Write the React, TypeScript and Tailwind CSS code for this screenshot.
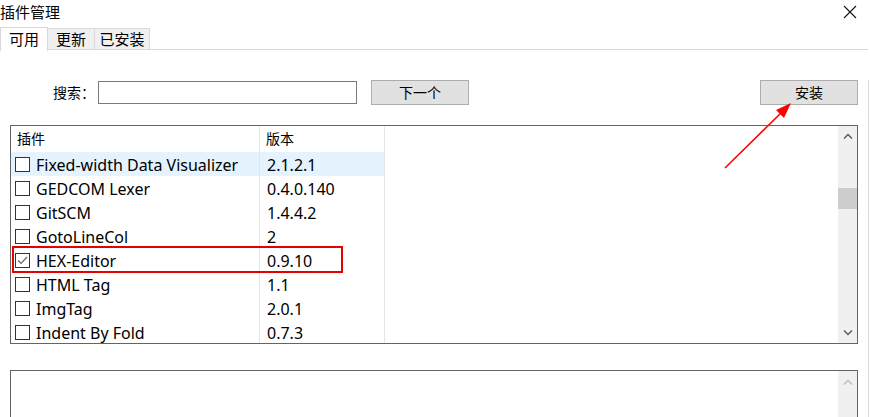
import React from "react";

const plugins = [
  { name: "Fixed-width Data Visualizer", version: "2.1.2.1", checked: false, hover: true },
  { name: "GEDCOM Lexer", version: "0.4.0.140", checked: false },
  { name: "GitSCM", version: "1.4.4.2", checked: false },
  { name: "GotoLineCol", version: "2", checked: false },
  { name: "HEX-Editor", version: "0.9.10", checked: true },
  { name: "HTML Tag", version: "1.1", checked: false },
  { name: "ImgTag", version: "2.0.1", checked: false },
  { name: "Indent By Fold", version: "0.7.3", checked: false },
];

const font = { fontFamily: '"Noto Sans", "Noto Sans CJK SC", sans-serif' };

function Checkbox({ checked }: { checked: boolean }) {
  return (
    <span className="w-[15px] h-[15px] border border-[#333] bg-white flex items-center justify-center shrink-0">
      {checked && (
        <svg width="13" height="13" viewBox="0 0 13 13">
          <path d="M2 6.5 L5 9.5 L11 3" stroke="#666" strokeWidth="1.2" fill="none" />
        </svg>
      )}
    </span>
  );
}

function Chevron({ up, color = "#606060" }: { up: boolean; color?: string }) {
  return (
    <svg width="10" height="6" viewBox="0 0 10 6">
      <path
        d={up ? "M1 5.5 L5 1.5 L9 5.5" : "M1 0.5 L5 4.5 L9 0.5"}
        stroke={color}
        strokeWidth="1.5"
        fill="none"
      />
    </svg>
  );
}

export default function App() {
  return (
    <div
      className="relative w-[870px] h-[417px] bg-white overflow-hidden text-[#000]"
      style={font}
    >
      <div className="flex items-center justify-between h-[24px]">
        <span className="text-[15px] leading-none pt-[1px]">插件管理</span>
        <svg width="14" height="14" viewBox="0 0 14 14" className="mr-[13px] mt-[-1px]">
          <path d="M1 1 L13 13 M13 1 L1 13" stroke="#111" strokeWidth="1.1" />
        </svg>
      </div>

      <div className="flex items-end h-[26px] pr-[2px]">
        <div className="h-[24px] w-[48px] border border-b-0 border-[#d9d9d9] bg-white flex items-center justify-center text-[15px] leading-none relative z-10 -mb-px">
          可用
        </div>
        <div className="h-[22px] w-[47px] border border-l-0 border-[#d9d9d9] bg-[#f0f0f0] flex items-center justify-center text-[15px] leading-none">
          更新
        </div>
        <div className="h-[22px] w-[55px] border border-l-0 border-[#d9d9d9] bg-[#f0f0f0] flex items-center justify-center text-[15px] leading-none">
          已安装
        </div>
        <div className="flex-1 h-[22px] border-b border-[#d9d9d9]" />
      </div>

      <div className="border-r border-[#d9d9d9] mr-[1px] h-[380px]">
        <div className="flex items-center h-[25px] mt-[30px]">
          <span className="ml-[53px] w-[45px] text-[14px] leading-none">搜索：</span>
          <div className="w-[259px] h-[23px] border border-[#7a7a7a] bg-white" />
          <button className="ml-[14px] w-[98px] h-[25px] border border-[#adadad] bg-[#e1e1e1] text-[14px] leading-none">
            下一个
          </button>
          <div className="flex-1" />
          <button className="mr-[10px] w-[98px] h-[25px] border border-[#adadad] bg-[#e1e1e1] text-[14px] leading-none">
            安装
          </button>
        </div>

        <div className="ml-[10px] mr-[10px] mt-[20px] h-[219px] border border-[#646464] flex">
          <div className="flex-1 relative overflow-hidden">
            <div className="flex h-[26px] items-center text-[14px] leading-none">
              <div className="w-[249px] pl-[6px] border-r border-[#e5e5e5] h-full flex items-center">插件</div>
              <div className="w-[125px] pl-[6px] border-r border-[#e5e5e5] h-full flex items-center">版本</div>
            </div>
            {plugins.map((p) => (
              <div key={p.name} className="flex h-[24px] items-center text-[16px] leading-none">
                <div
                  className={`w-[249px] h-full flex items-center gap-[6px] pl-[4px] border-r border-[#e5e5e5] ${
                    p.hover ? "bg-[#e5f3ff]" : ""
                  }`}
                >
                  <Checkbox checked={p.checked} />
                  <span className="pt-[1px]">{p.name}</span>
                </div>
                <div
                  className={`w-[125px] h-full flex items-center pl-[7px] pt-[1px] border-r border-[#e5e5e5] ${
                    p.hover ? "bg-[#e5f3ff]" : ""
                  }`}
                >
                  {p.version}
                </div>
              </div>
            ))}
            <div className="flex h-[10px]">
              <div className="w-[249px] border-r border-[#e5e5e5]" />
              <div className="w-[125px] border-r border-[#e5e5e5]" />
            </div>
          </div>
          <div className="w-[19px] bg-[#f0f0f0] flex flex-col items-center">
            <div className="h-[20px] flex items-center justify-center">
              <Chevron up />
            </div>
            <div className="h-[42px]" />
            <div className="w-[19px] h-[21px] bg-[#cdcdcd]" />
            <div className="flex-1" />
            <div className="h-[20px] flex items-center justify-center">
              <Chevron up={false} />
            </div>
          </div>
        </div>

        <div className="ml-[10px] mr-[10px] mt-[26px] h-[60px] border border-[#646464] flex">
          <div className="flex-1" />
          <div className="w-[19px] bg-[#f0f0f0] flex flex-col items-center pt-[1px]">
            <div className="h-[20px] flex items-center justify-center">
              <Chevron up color="#c0c0c0" />
            </div>
          </div>
        </div>
      </div>

      <div className="absolute left-[12px] top-[246px] w-[331px] h-[27px] border-2 border-[#e60000] pointer-events-none" />

      <svg className="absolute left-0 top-0 pointer-events-none" width="870" height="417">
        <line x1="725" y1="168" x2="781" y2="113" stroke="#ff0000" strokeWidth="1.6" />
        <path d="M791 103 L776 110 L784 118 Z" fill="#ff0000" />
      </svg>
    </div>
  );
}
